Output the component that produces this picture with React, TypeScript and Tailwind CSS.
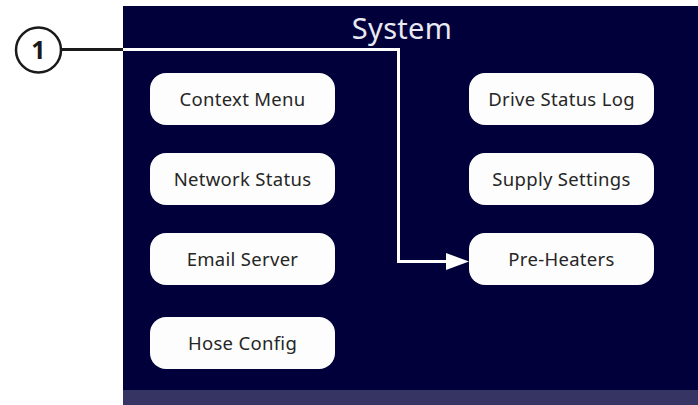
import React from "react";

const left = ["Context Menu", "Network Status", "Email Server", "Hose Config"];
const right = ["Drive Status Log", "Supply Settings", "Pre-Heaters"];

function Btn({ label }: { label: string }) {
  return (
    <div className="w-[185px] h-[52px] rounded-[16px] bg-[#fdfdfd] flex items-center justify-center text-[18.5px] tracking-[0.3px] text-[#262626] font-normal">
      {label}
    </div>
  );
}

export default function App() {
  return (
    <div
      className="relative w-[698px] h-[405px] bg-white overflow-hidden"
      style={{ fontFamily: '"Noto Sans", "Open Sans", sans-serif' }}
    >
      <div className="ml-[123px] pt-[6px] flex flex-col h-full">
        <div className="bg-[#01003a] h-[384px] flex flex-col">
          <div className="h-[67px] flex justify-center pr-[17px] pt-[4px]">
            <span className="text-[29px] leading-[36px] tracking-[0.3px] text-[#e9e9f2]">System</span>
          </div>
          <div className="flex pl-[27px] gap-[134px]">
            <div className="flex flex-col">
              <div className="flex flex-col gap-[28px]">
                <Btn label={left[0]} />
                <Btn label={left[1]} />
                <Btn label={left[2]} />
              </div>
              <div className="mt-[32px]">
                <Btn label={left[3]} />
              </div>
            </div>
            <div className="flex flex-col gap-[28px]">
              {right.map((r) => (
                <Btn key={r} label={r} />
              ))}
            </div>
          </div>
        </div>
        <div className="bg-[#363462] h-[15px]" />
      </div>

      <svg className="absolute left-0 top-0" width="698" height="405" viewBox="0 0 698 405">
        <circle cx="38.5" cy="50" r="22.5" fill="white" stroke="#1a1a1a" strokeWidth="2.5" />
        <line x1="61" y1="49.5" x2="123" y2="49.5" stroke="#1a1a1a" strokeWidth="3" />
        <polyline
          points="123,49.5 398.5,49.5 398.5,261.5 450,261.5"
          fill="none"
          stroke="white"
          strokeWidth="3"
        />
        <polygon points="446,253 469,261.5 446,270" fill="white" />
      </svg>
      <div className="absolute left-[16px] top-[27px] w-[45px] h-[46px] flex items-center justify-center text-[25px] font-bold text-[#1a1a1a]">
        1
      </div>
    </div>
  );
}
